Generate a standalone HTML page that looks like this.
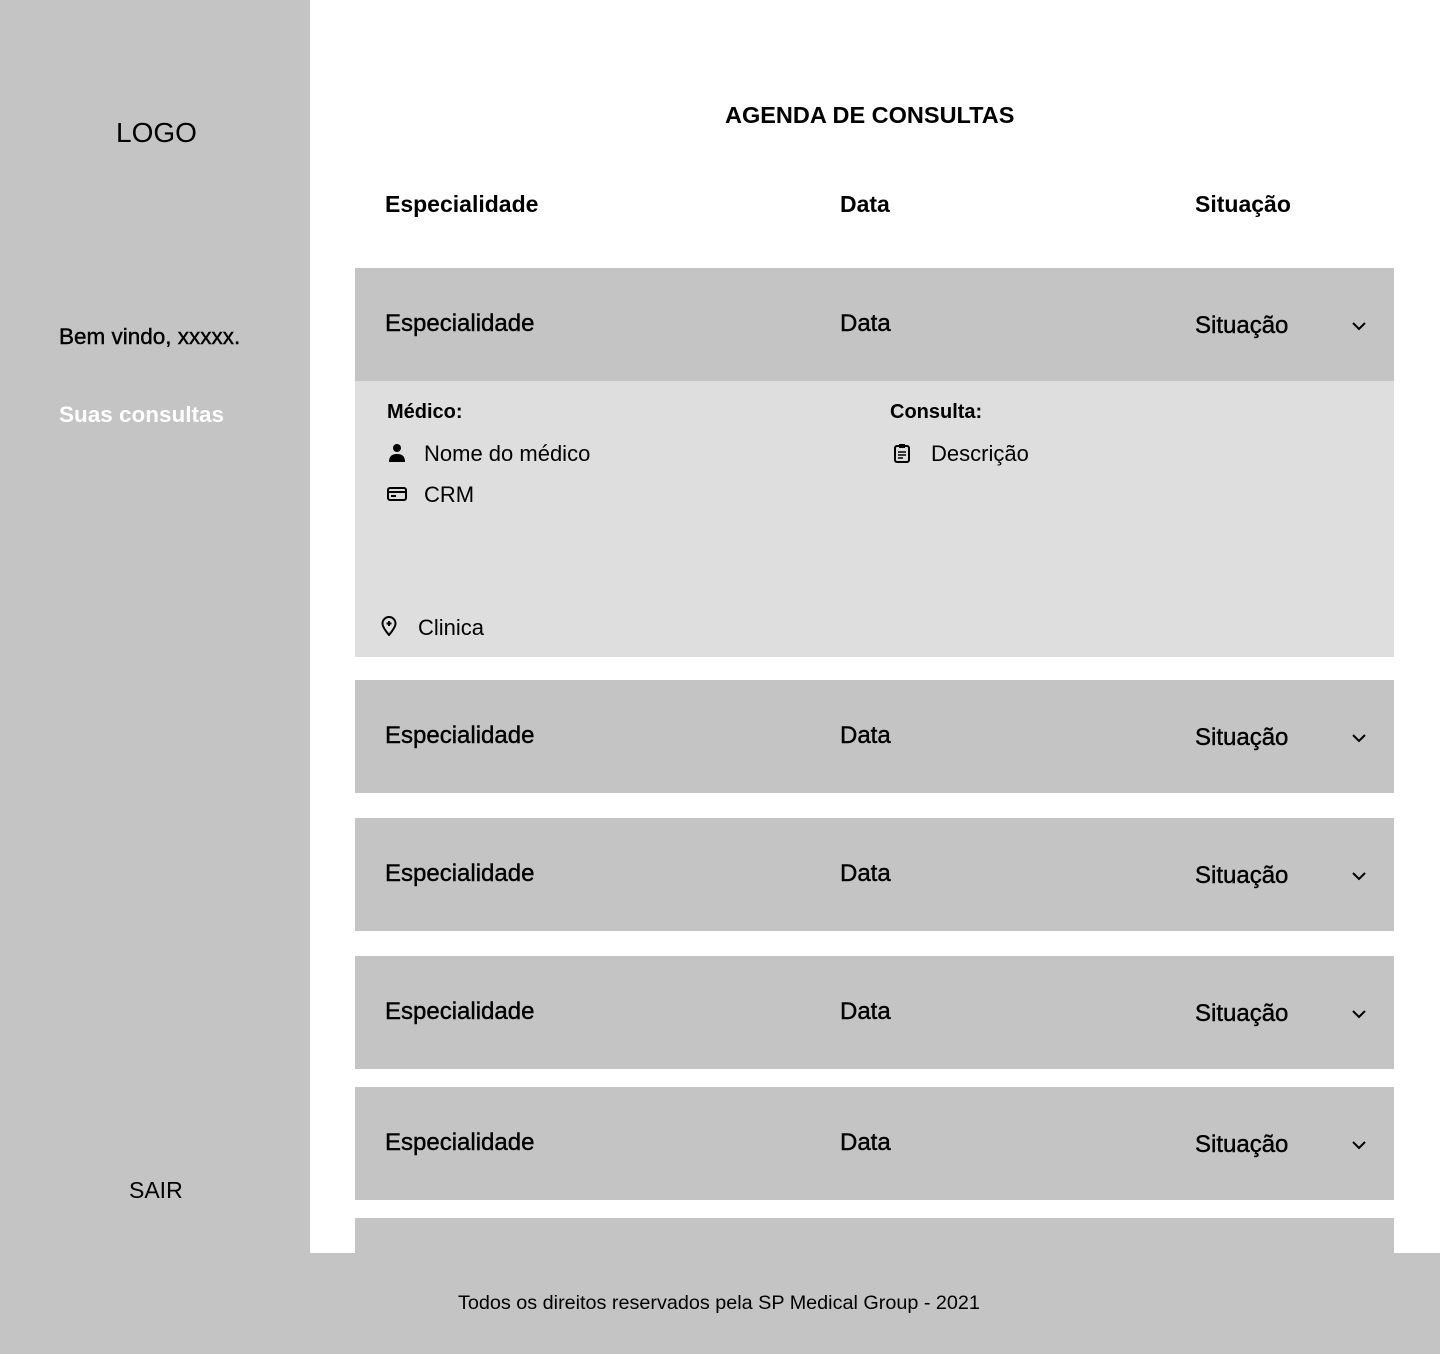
<!DOCTYPE html>
<html><head><meta charset="utf-8"><style>
*{margin:0;padding:0;box-sizing:border-box}
body{width:1440px;height:1354px;position:relative;background:#fff;font-family:"Liberation Sans",sans-serif;color:#000;overflow:hidden}
.abs{position:absolute;white-space:nowrap}
.side{position:absolute;left:0;top:0;width:310px;height:1253px;background:#c4c4c4}
.foot{position:absolute;left:0;top:1253px;width:1440px;height:101px;background:#c4c4c4}
.row{position:absolute;left:355px;width:1039px;height:113px;background:#c4c4c4}
.row span{position:absolute;font-size:24px;-webkit-text-stroke:0.4px #000}
.row svg{position:absolute;left:996px}
.det{position:absolute;left:355px;top:381px;width:1039px;height:276px;background:#dedede}
.h{font-size:23px;font-weight:bold}
.t{font-size:22px}
</style></head><body>
<div class="side"></div>
<div class="abs" style="left:116px;top:117px;font-size:28px">LOGO</div>
<div class="abs" style="left:59px;top:324px;font-size:22.5px;-webkit-text-stroke:0.4px #000">Bem vindo, xxxxx.</div>
<div class="abs" style="left:59px;top:402px;font-size:22.5px;font-weight:bold;color:#fff">Suas consultas</div>
<div class="abs" style="left:129px;top:1177px;font-size:23px">SAIR</div>

<div class="abs h" style="left:725px;top:102px;font-size:23.5px">AGENDA DE CONSULTAS</div>
<div class="abs h" style="left:385px;top:191px">Especialidade</div>
<div class="abs h" style="left:840px;top:191px">Data</div>
<div class="abs h" style="left:1195px;top:191px">Situação</div>

<div class="row" style="top:268px"><span style="left:30px;top:42px">Especialidade</span><span style="left:485px;top:42px">Data</span><span style="left:840px;top:44px">Situação</span><svg style="top:50px" width="16" height="16" viewBox="0 0 16 16"><path d="M2 5l6 6 6-6" fill="none" stroke="#000" stroke-width="2"/></svg></div>
<div class="det">
<div class="abs" style="left:32px;top:20px;font-size:20px;font-weight:bold">Médico:</div>
<div class="abs" style="left:535px;top:20px;font-size:20px;font-weight:bold">Consulta:</div>
<svg class="abs" style="left:33px;top:62px" width="18" height="20" viewBox="0 0 18 20"><circle cx="9" cy="5" r="4" fill="#000"/><path d="M1 19c0-6 3-8 8-8s8 2 8 8z" fill="#000"/></svg>
<div class="abs t" style="left:69px;top:60px">Nome do médico</div>
<svg class="abs" style="left:32px;top:105px" width="20" height="16" viewBox="0 0 20 16"><rect x="1" y="2" width="18" height="12" rx="2" fill="none" stroke="#000" stroke-width="2"/><path d="M1 6h18" stroke="#000" stroke-width="2"/><path d="M4 10h5" stroke="#000" stroke-width="2"/></svg>
<div class="abs t" style="left:69px;top:101px">CRM</div>
<svg class="abs" style="left:538px;top:62px" width="18" height="20" viewBox="0 0 18 20"><rect x="2" y="3" width="14" height="16" rx="2" fill="none" stroke="#000" stroke-width="2"/><rect x="6" y="1" width="6" height="4" fill="#000"/><path d="M5 9h8M5 12h8M5 15h5" stroke="#000" stroke-width="1.6"/></svg>
<div class="abs t" style="left:576px;top:60px">Descrição</div>
<svg class="abs" style="left:26px;top:235px" width="16" height="20" viewBox="0 0 16 20"><path d="M8 19C3 13 1.5 10 1.5 7.5a6.5 6.5 0 0113 0C14.5 10 13 13 8 19z" fill="none" stroke="#000" stroke-width="2"/><path d="M8 5v5M5.5 7.5h5" stroke="#000" stroke-width="2"/></svg>
<div class="abs t" style="left:63px;top:234px">Clinica</div>
</div>

<div class="row" style="top:680px"><span style="left:30px;top:42px">Especialidade</span><span style="left:485px;top:42px">Data</span><span style="left:840px;top:44px">Situação</span><svg style="top:50px" width="16" height="16" viewBox="0 0 16 16"><path d="M2 5l6 6 6-6" fill="none" stroke="#000" stroke-width="2"/></svg></div>
<div class="row" style="top:818px"><span style="left:30px;top:42px">Especialidade</span><span style="left:485px;top:42px">Data</span><span style="left:840px;top:44px">Situação</span><svg style="top:50px" width="16" height="16" viewBox="0 0 16 16"><path d="M2 5l6 6 6-6" fill="none" stroke="#000" stroke-width="2"/></svg></div>
<div class="row" style="top:956px"><span style="left:30px;top:42px">Especialidade</span><span style="left:485px;top:42px">Data</span><span style="left:840px;top:44px">Situação</span><svg style="top:50px" width="16" height="16" viewBox="0 0 16 16"><path d="M2 5l6 6 6-6" fill="none" stroke="#000" stroke-width="2"/></svg></div>
<div class="row" style="top:1087px"><span style="left:30px;top:42px">Especialidade</span><span style="left:485px;top:42px">Data</span><span style="left:840px;top:44px">Situação</span><svg style="top:50px" width="16" height="16" viewBox="0 0 16 16"><path d="M2 5l6 6 6-6" fill="none" stroke="#000" stroke-width="2"/></svg></div>
<div class="row" style="top:1218px;height:40px"></div>

<div class="foot"></div>
<div class="abs" style="left:458px;top:1292px;font-size:19.8px">Todos os direitos reservados pela SP Medical Group - 2021</div>
</body></html>
